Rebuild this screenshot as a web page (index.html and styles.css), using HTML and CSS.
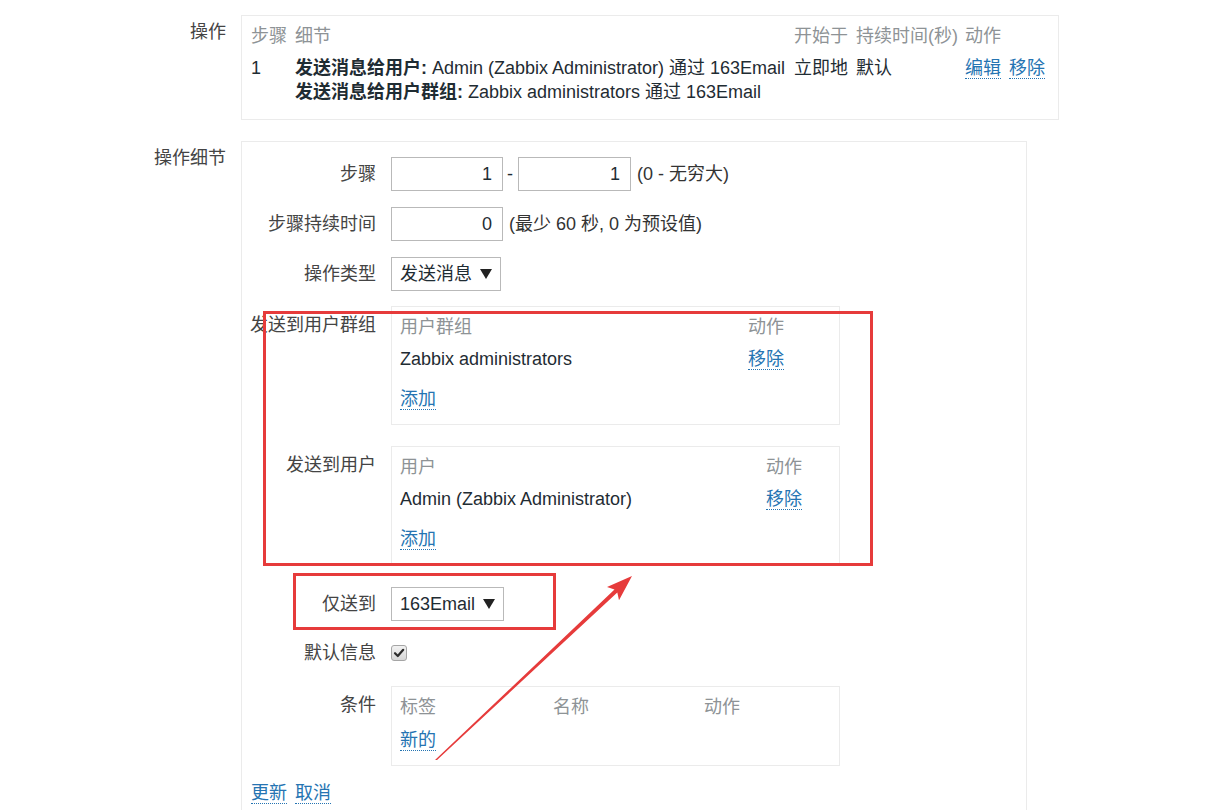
FILE: index.html
```html
<!DOCTYPE html>
<html>

<head>
    <meta charset="UTF-8">
    <title>操作细节</title>
    <link rel="stylesheet" href="styles.css">
</head>

<body>
    <div class="page">
        <div class="form-row">
            <div class="form-label">操作</div>
            <div class="form-field">
                <div class="box ops-box">
                    <table class="list ops-table">
                        <colgroup>
                            <col style="width:44px">
                            <col style="width:499px">
                            <col style="width:62px">
                            <col style="width:109px">
                            <col>
                        </colgroup>
                        <tr class="head">
                            <td>步骤</td>
                            <td>细节</td>
                            <td>开始于</td>
                            <td>持续时间(秒)</td>
                            <td>动作</td>
                        </tr>
                        <tr>
                            <td>1</td>
                            <td class="nowrap">
                                <b>发送消息给用户:</b> Admin (Zabbix Administrator) 通过 163Email<br>
                                <b>发送消息给用户群组:</b> Zabbix administrators 通过 163Email
                            </td>
                            <td>立即地</td>
                            <td>默认</td>
                            <td><a class="link">编辑</a><a class="link">移除</a></td>
                        </tr>
                    </table>
                </div>
            </div>
        </div>

        <div class="form-row detail-row">
            <div class="form-label">操作细节</div>
            <div class="form-field">
                <div class="box detail-box">
                    <div class="sub-row gap16">
                        <div class="sub-label">步骤</div>
                        <div class="sub-field">
                            <span class="input">1</span>
                            <span class="dash">-</span>
                            <span class="input w113">1</span>
                            <span class="hint">(0 - 无穷大)</span>
                        </div>
                    </div>
                    <div class="sub-row gap16">
                        <div class="sub-label">步骤持续时间</div>
                        <div class="sub-field">
                            <span class="input">0</span>
                            <span class="hint">(最少 60 秒, 0 为预设值)</span>
                        </div>
                    </div>
                    <div class="sub-row gap15">
                        <div class="sub-label">操作类型</div>
                        <div class="sub-field">
                            <span class="select w110">发送消息<i class="arrow"></i></span>
                        </div>
                    </div>
                    <div class="sub-row gap21">
                        <div class="sub-label top">发送到用户群组</div>
                        <div class="sub-field">
                            <div class="box inner-box">
                                <table class="list">
                                    <colgroup>
                                        <col style="width:348px">
                                        <col>
                                    </colgroup>
                                    <tr class="head">
                                        <td>用户群组</td>
                                        <td>动作</td>
                                    </tr>
                                    <tr>
                                        <td>Zabbix administrators</td>
                                        <td><a class="link">移除</a></td>
                                    </tr>
                                </table>
                                <div class="add-row"><a class="link">添加</a></div>
                            </div>
                        </div>
                    </div>
                    <div class="sub-row gap22">
                        <div class="sub-label top">发送到用户</div>
                        <div class="sub-field">
                            <div class="box inner-box">
                                <table class="list">
                                    <colgroup>
                                        <col style="width:366px">
                                        <col>
                                    </colgroup>
                                    <tr class="head">
                                        <td>用户</td>
                                        <td>动作</td>
                                    </tr>
                                    <tr>
                                        <td>Admin (Zabbix Administrator)</td>
                                        <td><a class="link">移除</a></td>
                                    </tr>
                                </table>
                                <div class="add-row"><a class="link">添加</a></div>
                            </div>
                        </div>
                    </div>
                    <div class="sub-row gap15">
                        <div class="sub-label">仅送到</div>
                        <div class="sub-field">
                            <span class="select w113">163Email<i class="arrow"></i></span>
                        </div>
                    </div>
                    <div class="sub-row gap16">
                        <div class="sub-label">默认信息</div>
                        <div class="sub-field">
                            <span class="checkbox">
                                <svg width="16" height="16" viewBox="0 0 16 16">
                                    <path d="M4 8.2 L6.8 11 L12.2 4.8" fill="none" stroke="#2b2b2b" stroke-width="2.2" stroke-linecap="round" stroke-linejoin="round"/>
                                </svg>
                            </span>
                        </div>
                    </div>
                    <div class="sub-row gap15">
                        <div class="sub-label top">条件</div>
                        <div class="sub-field">
                            <div class="box inner-box cond-box">
                                <table class="list">
                                    <colgroup>
                                        <col style="width:153px">
                                        <col style="width:151px">
                                        <col>
                                    </colgroup>
                                    <tr class="head">
                                        <td>标签</td>
                                        <td>名称</td>
                                        <td>动作</td>
                                    </tr>
                                </table>
                                <div class="new-row"><a class="link">新的</a></div>
                            </div>
                        </div>
                    </div>
                    <div class="buttons">
                        <a class="link">更新</a><a class="link">取消</a>
                    </div>
                </div>
            </div>
        </div>
    </div>

    <!-- 标注 -->
    <svg class="marks" width="1222" height="810" viewBox="0 0 1222 810">
        <rect x="264.5" y="312.5" width="607" height="252" fill="none" stroke="#e63b3b" stroke-width="3"/>
        <rect x="294.5" y="574.5" width="260" height="54" fill="none" stroke="#e63b3b" stroke-width="3"/>
        <polygon points="435,760 614.5,589.5 607,587 632,576 619,600.3 617.3,592.5 437,760" fill="#e63b3b"/>
    </svg>
</body>

</html>
```

FILE: styles.css
```css
body,
table,
td {
    margin: 0;
    padding: 0;
}

body {
    background: #fff;
    color: #1f2c33;
    font-family: "Liberation Sans", "Noto Sans CJK SC", sans-serif;
    font-size: 18px;
    line-height: 24px;
}

table {
    border-collapse: collapse;
    border-spacing: 0;
}

td {
    vertical-align: top;
}

.page {
    position: relative;
    padding-top: 15px;
}

.form-row {
    display: flex;
    align-items: flex-start;
}

.form-label {
    width: 226px;
    padding: 5px 15px 0 0;
    text-align: right;
    color: #444;
    flex: none;
}

.detail-row {
    margin-top: 21px;
}

.box {
    border: 1px solid #ebebeb;
    background: #fff;
}

.ops-box {
    width: 807px;
    padding: 8px 0 15px 9px;
}

.list {
    table-layout: fixed;
    width: 100%;
}

.list .head td {
    color: #8e9396;
    padding-bottom: 8px;
}

.nowrap {
    white-space: nowrap;
}

.ops-table b {
    font-weight: bold;
    color: #1f2c33;
}

.link {
    color: #2574b2;
    border-bottom: 1px dotted #2574b2;
    cursor: pointer;
}

.ops-table .link,
.buttons .link {
    margin-right: 8px;
}

.detail-box {
    width: 784px;
    padding: 15px 0 40px;
}

.sub-row {
    display: flex;
    align-items: flex-start;
}

.gap15 {
    margin-bottom: 15px;
}

.gap16 {
    margin-bottom: 16px;
}

.gap21 {
    margin-bottom: 21px;
}

.gap22 {
    margin-bottom: 22px;
}

.sub-label {
    width: 134px;
    padding: 5px 15px 0 0;
    text-align: right;
    color: #444;
    flex: none;
    white-space: nowrap;
}

.sub-label.top {
    padding-top: 7px;
}

.sub-field {
    display: flex;
    align-items: center;
    min-height: 34px;
}

.input {
    box-sizing: border-box;
    width: 112px;
    height: 34px;
    border: 1px solid #b9b9b9;
    padding: 4px 10px 0 0;
    text-align: right;
}

.w113 {
    width: 113px;
}

.dash {
    margin: 0 5px 0 4px;
}

.hint {
    margin-left: 6px;
    color: #333;
}

.select {
    box-sizing: border-box;
    display: flex;
    align-items: center;
    height: 34px;
    border: 1px solid #b9b9b9;
    padding: 0 8px;
    justify-content: space-between;
}

.select.w110 {
    width: 110px;
}

.arrow {
    width: 0;
    height: 0;
    border-left: 6px solid transparent;
    border-right: 6px solid transparent;
    border-top: 10px solid #222;
}

.inner-box {
    box-sizing: border-box;
    width: 449px;
    padding: 8px 0 13px 8px;
}

.add-row {
    margin-top: 16px;
}

.cond-box .head td {
    padding-bottom: 9px;
}

.checkbox {
    box-sizing: border-box;
    display: block;
    width: 16px;
    height: 16px;
    border: 1px solid #a5a5a5;
    border-radius: 3px;
    background: linear-gradient(#f2f2f2, #d6d6d6);
}

.checkbox svg {
    display: block;
    margin: -1px 0 0 -1px;
}

.buttons {
    margin-top: 15px;
    padding-left: 9px;
}

.marks {
    position: absolute;
    left: 0;
    top: 0;
    pointer-events: none;
}
```
